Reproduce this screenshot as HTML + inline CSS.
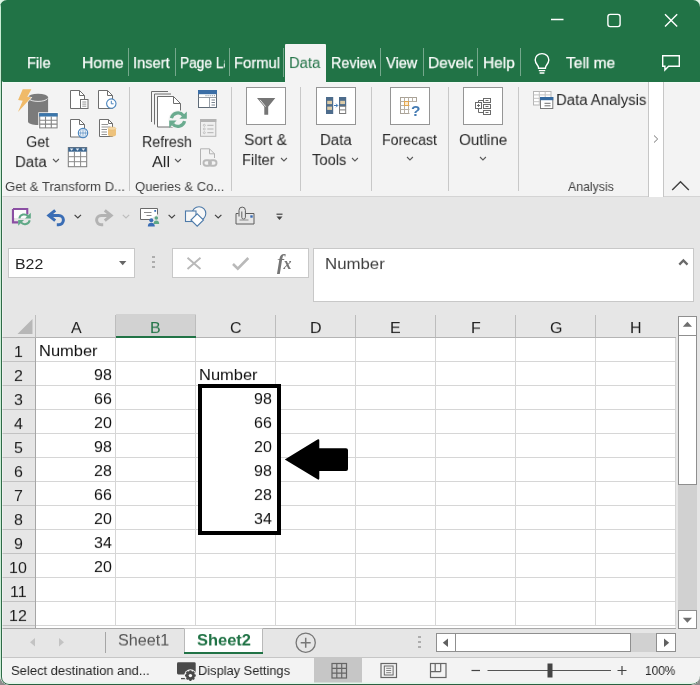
<!DOCTYPE html>
<html lang="en"><head><meta charset="utf-8"><title>Excel - Sheet2</title>
<style>
html,body{margin:0;padding:0;background:#dcf5e4}
body{width:700px;height:685px;overflow:hidden;position:relative;font-family:"Liberation Sans",sans-serif}
#win{position:absolute;left:0;top:0;width:700px;height:685px;overflow:hidden;border-radius:7px 7px 9px 9px;background:#e6e6e6}
.a{position:absolute;display:block}
.t{position:absolute;white-space:nowrap;line-height:1;will-change:transform}
.clip{position:absolute;overflow:hidden}
svg{overflow:visible}
</style></head><body>

<div class="a" style="left:0px;top:675px;width:10px;height:10px;background:#8c8c8c;"></div>
<div class="a" style="left:690px;top:675px;width:10px;height:10px;background:#8c8c8c;"></div>
<div id="win">
<div class="a" style="left:0px;top:0px;width:700px;height:82px;background:#217346;"></div>
<svg class="a" style="left:550px;top:11.6px" width="130" height="18" viewBox="0 0 130 18"><path d="M1 7.5H13.5" stroke="#fff" stroke-width="1.4" fill="none"/><rect x="57.9" y="2.4" width="12.2" height="12.2" rx="2.3" stroke="#fff" stroke-width="1.4" fill="none"/><path d="M115 2.3L127.2 14.5M127.2 2.3L115 14.5" stroke="#fff" stroke-width="1.4" fill="none"/></svg>
<div class="a" style="left:285px;top:44px;width:41px;height:39px;background:#f3f3f3;border-radius:1px 1px 0 0"></div>
<div class="a" style="left:128px;top:48px;width:1px;height:28px;background:rgba(255,255,255,0.38);"></div>
<div class="a" style="left:175px;top:48px;width:1px;height:28px;background:rgba(255,255,255,0.38);"></div>
<div class="a" style="left:229px;top:48px;width:1px;height:28px;background:rgba(255,255,255,0.38);"></div>
<div class="a" style="left:380px;top:48px;width:1px;height:28px;background:rgba(255,255,255,0.38);"></div>
<div class="a" style="left:423px;top:48px;width:1px;height:28px;background:rgba(255,255,255,0.38);"></div>
<div class="a" style="left:477px;top:48px;width:1px;height:28px;background:rgba(255,255,255,0.38);"></div>
<div class="a" style="left:520px;top:48px;width:1px;height:28px;background:rgba(255,255,255,0.38);"></div>
<div class="a" style="left:283px;top:48px;width:1px;height:29px;background:rgba(255,255,255,0.38);"></div>
<div class="t" style="left:26.83px;top:56.30px;font-size:16px;color:#fff;transform:scale(0.9133,0.93);transform-origin:0 0;-webkit-text-stroke:0.250px #fff;">File</div>
<div class="t" style="left:81.65px;top:56.30px;font-size:16px;color:#fff;transform:scale(0.9769,0.93);transform-origin:0 0;-webkit-text-stroke:0.250px #fff;">Home</div>
<div class="t" style="left:133.08px;top:56.30px;font-size:16px;color:#fff;transform:scale(0.9174,0.93);transform-origin:0 0;-webkit-text-stroke:0.250px #fff;">Insert</div>
<div class="clip" style="left:179.9px;top:48px;width:45.400000000000006px;height:30px">
<div class="t" style="left:-0.10px;top:8.30px;font-size:16px;color:#fff;-webkit-text-stroke:0.250px #fff;transform:scale(0.8558,0.93);transform-origin:0 0">Page Layout</div></div>
<div class="clip" style="left:233.9px;top:48px;width:45.70000000000002px;height:30px">
<div class="t" style="left:-0.18px;top:8.30px;font-size:16px;color:#fff;-webkit-text-stroke:0.250px #fff;transform:scale(0.9254,0.93);transform-origin:0 0">Formulas</div></div>
<div class="t" style="left:289.22px;top:56.30px;font-size:16px;color:#217346;transform:scale(0.9236,0.93);transform-origin:0 0;">Data</div>
<div class="clip" style="left:331px;top:48px;width:45.30000000000001px;height:30px">
<div class="t" style="left:-0.15px;top:8.30px;font-size:16px;color:#fff;-webkit-text-stroke:0.250px #fff;transform:scale(0.8984,0.93);transform-origin:0 0">Review</div></div>
<div class="t" style="left:386.33px;top:56.30px;font-size:16px;color:#fff;transform:scale(0.9091,0.93);transform-origin:0 0;-webkit-text-stroke:0.250px #fff;">View</div>
<div class="clip" style="left:428.2px;top:48px;width:45.0px;height:30px">
<div class="t" style="left:-0.24px;top:8.30px;font-size:16px;color:#fff;-webkit-text-stroke:0.250px #fff;transform:scale(0.9657,0.93);transform-origin:0 0">Developer</div></div>
<div class="t" style="left:482.66px;top:56.30px;font-size:16px;color:#fff;transform:scale(0.9658,0.93);transform-origin:0 0;-webkit-text-stroke:0.250px #fff;">Help</div>
<div class="t" style="left:566.39px;top:56.30px;font-size:16px;color:#fff;transform:scale(0.9698,0.93);transform-origin:0 0;-webkit-text-stroke:0.250px #fff;">Tell me</div>
<svg class="a" style="left:533px;top:52px" width="18" height="23" viewBox="0 0 18 23"><path d="M9 1.6C4.9 1.6 2.2 4.6 2.2 8.1c0 2.3 1.2 3.8 2.3 5.2 0.7 0.9 1.1 1.7 1.1 2.9h6.8c0-1.2 0.4-2 1.1-2.9 1.1-1.4 2.3-2.9 2.3-5.2C15.8 4.6 13.100 1.6 9 1.6Z" fill="none" stroke="#fff" stroke-width="1.4"/><path d="M5.8 18.6h6.4M6.6 21h4.8" stroke="#fff" stroke-width="1.3" fill="none"/></svg>
<svg class="a" style="left:661px;top:54px" width="20" height="18" viewBox="0 0 20 18"><path d="M1.7 1.7H18.3V12.300H7.6L3.9 16V12.300H1.700Z" fill="none" stroke="#fff" stroke-width="1.4" stroke-linejoin="miter"/></svg>
<div class="a" style="left:0px;top:82px;width:700px;height:114px;background:#f3f3f3;"></div>
<div class="a" style="left:0px;top:82px;width:285px;height:1px;background:#f1fbf5;"></div>
<div class="a" style="left:326px;top:82px;width:374px;height:1px;background:#f1fbf5;"></div>
<div class="a" style="left:0px;top:196px;width:700px;height:1px;background:#d4d4d4;"></div>
<div class="a" style="left:129px;top:87px;width:1px;height:104px;background:#c8c8c8;"></div>
<div class="a" style="left:231px;top:87px;width:1px;height:104px;background:#c8c8c8;"></div>
<div class="a" style="left:300px;top:87px;width:1px;height:104px;background:#c8c8c8;"></div>
<div class="a" style="left:371px;top:87px;width:1px;height:104px;background:#c8c8c8;"></div>
<div class="a" style="left:448px;top:87px;width:1px;height:104px;background:#c8c8c8;"></div>
<div class="a" style="left:518px;top:87px;width:1px;height:104px;background:#c8c8c8;"></div>
<div class="a" style="left:648px;top:82px;width:16px;height:115px;background:#ffffff;border-left:1px solid #c6c6c6;border-right:1px solid #c6c6c6;box-sizing:border-box"></div>
<svg class="a" style="left:652px;top:134px" width="8" height="10" viewBox="0 0 8 10"><path d="M2 1.500L5.700 5L2 8.500" fill="none" stroke="#777" stroke-width="1"/></svg>
<svg class="a" style="left:671px;top:180px" width="19" height="11" viewBox="0 0 19 11"><path d="M1.200 10L9.500 1.800L17.800 10" fill="none" stroke="#444" stroke-width="1.5"/></svg>
<div class="t" style="left:25.68px;top:135.20px;font-size:16px;color:#262626;transform:scale(0.9003,0.93);transform-origin:0 0;">Get</div>
<div class="t" style="left:15.00px;top:154.70px;font-size:16px;color:#262626;transform:scale(0.9360,0.93);transform-origin:0 0;">Data</div>
<svg class="a" style="left:52.05px;top:157.8px" width="7.9" height="5" viewBox="0 0 7.9 5"><path d="M1 1L3.95 4.00L6.90 1" fill="none" stroke="#5a5a5a" stroke-width="1.1"/></svg>
<div class="t" style="left:141.86px;top:135.20px;font-size:16px;color:#262626;transform:scale(0.8867,0.93);transform-origin:0 0;">Refresh</div>
<div class="t" style="left:151.80px;top:154.70px;font-size:16px;color:#262626;transform:scale(1.0167,0.93);transform-origin:0 0;">All</div>
<svg class="a" style="left:173.95px;top:157.8px" width="7.9" height="5" viewBox="0 0 7.9 5"><path d="M1 1L3.95 4.00L6.90 1" fill="none" stroke="#5a5a5a" stroke-width="1.1"/></svg>
<div class="t" style="left:244.21px;top:133.40px;font-size:16px;color:#262626;transform:scale(0.9645,0.93);transform-origin:0 0;">Sort &amp;</div>
<div class="t" style="left:241.83px;top:153.40px;font-size:16px;color:#262626;transform:scale(0.9176,0.93);transform-origin:0 0;">Filter</div>
<svg class="a" style="left:280.35px;top:156.5px" width="7.9" height="5" viewBox="0 0 7.9 5"><path d="M1 1L3.95 4.00L6.90 1" fill="none" stroke="#5a5a5a" stroke-width="1.1"/></svg>
<div class="t" style="left:319.60px;top:133.40px;font-size:16px;color:#262626;transform:scale(0.9360,0.93);transform-origin:0 0;">Data</div>
<div class="t" style="left:311.81px;top:153.40px;font-size:16px;color:#262626;transform:scale(0.9211,0.93);transform-origin:0 0;">Tools</div>
<svg class="a" style="left:351.05px;top:156.5px" width="7.9" height="5" viewBox="0 0 7.9 5"><path d="M1 1L3.95 4.00L6.90 1" fill="none" stroke="#5a5a5a" stroke-width="1.1"/></svg>
<div class="t" style="left:381.87px;top:133.40px;font-size:16px;color:#262626;transform:scale(0.8832,0.93);transform-origin:0 0;">Forecast</div>
<svg class="a" style="left:406.05px;top:156.1px" width="7.9" height="5" viewBox="0 0 7.9 5"><path d="M1 1L3.95 4.00L6.90 1" fill="none" stroke="#5a5a5a" stroke-width="1.1"/></svg>
<div class="t" style="left:459.22px;top:133.40px;font-size:16px;color:#262626;transform:scale(0.9512,0.93);transform-origin:0 0;">Outline</div>
<svg class="a" style="left:479.05px;top:156.1px" width="7.9" height="5" viewBox="0 0 7.9 5"><path d="M1 1L3.95 4.00L6.90 1" fill="none" stroke="#5a5a5a" stroke-width="1.1"/></svg>
<div class="t" style="left:556.21px;top:93.10px;font-size:16px;color:#262626;transform:scale(0.9315,0.93);transform-origin:0 0;">Data Analysis</div>
<div class="t" style="left:5.35px;top:179.66px;font-size:13.4px;color:#444444;transform:scale(0.9774,1.0);transform-origin:0 0;">Get &amp; Transform D...</div>
<div class="t" style="left:135.01px;top:179.66px;font-size:13.4px;color:#444444;transform:scale(0.9757,1.0);transform-origin:0 0;">Queries &amp; Co...</div>
<div class="t" style="left:568.40px;top:179.66px;font-size:13.4px;color:#444444;transform:scale(0.9182,1.0);transform-origin:0 0;">Analysis</div>
<div class="a" style="left:246px;top:87px;width:40px;height:38px;background:#fff;border:1px solid #959595;box-sizing:border-box"></div>
<div class="a" style="left:316px;top:87px;width:40px;height:38px;background:#fff;border:1px solid #959595;box-sizing:border-box"></div>
<div class="a" style="left:390px;top:87px;width:40px;height:38px;background:#fff;border:1px solid #959595;box-sizing:border-box"></div>
<div class="a" style="left:463px;top:87px;width:40px;height:38px;background:#fff;border:1px solid #959595;box-sizing:border-box"></div>
<svg class="a" style="left:0;top:0" width="700" height="685" viewBox="0 0 700 685"><path d="M26.900 97.300V121.600C26.900 124 31.900 126 38.050 126S49.200 124 49.200 121.600V97.300C49.200 94.500 44.200 92.700 38.050 92.700S26.900 94.500 26.900 97.300Z" fill="#f3f3f3"/>
<path d="M28 97.300V121.400C28 123.400 32.500 124.900 38.050 124.900S48.100 123.400 48.100 121.400V97.300Z" fill="#7b7b7b"/>
<ellipse cx="38.050" cy="97.300" rx="10.050" ry="3.600" fill="#7b7b7b"/>
<path d="M28.600 98.600C30 100.400 33.600 101.400 38.050 101.400S46.100 100.400 47.500 98.600" fill="none" stroke="#f3f3f3" stroke-width="0.900"/>
<path d="M22.700 89.300H31.400L27.300 96.800L31.200 97.600L18 112L22.700 100.800L18.100 99.900Z" fill="#f0ba68" stroke="#f3f3f3" stroke-width="1.200" paint-order="stroke"/>
<rect x="38.300" y="112.300" width="20.100" height="16.800" fill="#fff"/>
<rect x="39.700" y="113.700" width="17.400" height="14.200" fill="#fff" stroke="#858585" stroke-width="1.100"/>
<rect x="39.150" y="113.150" width="18.500" height="3.400" fill="#3b76ab"/>
<path d="M39.700 120.300H57.100M39.700 124.100H57.100M45.500 116.500V127.900M51.300 116.500V127.900" stroke="#858585" stroke-width="1.100" fill="none"/>
<path d="M70.5 90.5H79.5L84.5 95.5V108.5H70.5Z" fill="#fff" stroke="#6e6e6e" stroke-width="1"/>
<path d="M79.5 90.5V95.5H84.5" fill="none" stroke="#6e6e6e" stroke-width="1"/>
<rect x="80.500" y="99.500" width="7.500" height="9" fill="#fff" stroke="#6e6e6e" stroke-width="1"/>
<path d="M82.300 102H86.300M82.300 104.100H86.300M82.300 106.200H86.300" stroke="#7a7a7a" stroke-width="0.800"/>
<path d="M98.5 90.5H107.5L112.5 95.5V108.5H98.5Z" fill="#fff" stroke="#6e6e6e" stroke-width="1"/>
<path d="M107.5 90.5V95.5H112.5" fill="none" stroke="#6e6e6e" stroke-width="1"/>
<circle cx="111.300" cy="103.600" r="4.700" fill="#fff" stroke="#4a84bd" stroke-width="1.100"/>
<path d="M111.300 100.800V103.800H113.600" fill="none" stroke="#4a84bd" stroke-width="1"/>
<path d="M70.5 119.5H79.5L84.5 124.5V137.0H70.5Z" fill="#fff" stroke="#6e6e6e" stroke-width="1"/>
<path d="M79.5 119.5V124.5H84.5" fill="none" stroke="#6e6e6e" stroke-width="1"/>
<circle cx="83" cy="133" r="4.700" fill="#fff" stroke="#4a84bd" stroke-width="1.100"/>
<path d="M78.400 133H87.600M83 128.400V137.600" stroke="#4a84bd" stroke-width="0.700" fill="none"/>
<ellipse cx="83" cy="133" rx="2.400" ry="4.700" fill="none" stroke="#4a84bd" stroke-width="0.600"/>
<path d="M99.5 119.5H108.5L112.5 123.5V136.5H99.5Z" fill="#fff" stroke="#6e6e6e" stroke-width="1"/>
<path d="M108.5 119.5V123.5H112.5" fill="none" stroke="#6e6e6e" stroke-width="1"/>
<path d="M101.500 124.500H108M101.500 127H110.500M101.500 129.500H107M101.500 132H107M101.500 134.500H107" stroke="#7a7a7a" stroke-width="0.800"/>
<path d="M108 128.500V134.800C108 135.800 109.800 136.600 112 136.600S116 135.800 116 134.800V128.500Z" fill="#edc27c"/>
<ellipse cx="112" cy="128.500" rx="4" ry="1.500" fill="#f5d9a8" stroke="#e6b96f" stroke-width="0.500"/>
<rect x="68.300" y="147.500" width="18.400" height="19.200" fill="#fff" stroke="#7a7a7a" stroke-width="1"/>
<rect x="68.300" y="147.500" width="18.400" height="4.200" fill="#3c6791"/>
<path d="M69.800 148.600H73.400L71.600 150.800ZM75.700 148.600H79.300L77.500 150.800ZM81.600 148.600H85.200L83.400 150.800Z" fill="#e8eef5"/>
<path d="M68.300 156.700H86.700M68.300 161.700H86.700M74.400 151.700V166.700M80.600 151.700V166.700" stroke="#8a8a8a" stroke-width="1" fill="none"/>
<path d="M151.5 122V91.5H168" fill="none" stroke="#6e6e6e" stroke-width="1"/>
<path d="M154.5 124.5V94.0H171" fill="none" stroke="#6e6e6e" stroke-width="1"/>
<path d="M157.500 96.500H173.500L180.500 103.500V127H157.500Z" fill="#fff" stroke="#6e6e6e" stroke-width="1"/>
<path d="M173.500 96.500V103.500H180.500" fill="none" stroke="#6e6e6e" stroke-width="1"/>
<circle cx="178" cy="119.700" r="9.600" fill="#f3f3f3"/>
<path d="M171.400 118.200A6.800 6.800 0 0 1 183.300 115.500" fill="none" stroke="#6aab8f" stroke-width="3.200"/>
<path d="M186.800 111.400V118.800H179.400Z" fill="#6aab8f"/>
<path d="M184.600 121.200A6.800 6.800 0 0 1 172.700 123.900" fill="none" stroke="#6aab8f" stroke-width="3.200"/>
<path d="M169.200 128V120.600H176.600Z" fill="#6aab8f"/>
<rect x="198.500" y="90.500" width="18" height="17" fill="#fff" stroke="#5f6b78" stroke-width="1"/>
<rect x="198" y="90" width="19" height="4.200" fill="#3b6ea6"/>
<path d="M205.500 95.700H215.500" stroke="#6b7785" stroke-width="0.900" stroke-dasharray="1 1.100"/>
<path d="M198.500 97.500H216.500M209.500 97.500V107.500" stroke="#7d8791" stroke-width="0.800" fill="none"/>
<path d="M211.500 100H215M211.500 102.500H215M211.500 105H215" stroke="#6b7785" stroke-width="0.900" fill="none"/>
<rect x="200.500" y="119.500" width="15.300" height="16.800" fill="#efefef" stroke="#b3b3b3" stroke-width="1"/>
<rect x="200" y="119" width="16.300" height="3" fill="#b3b3b3"/>
<circle cx="204.300" cy="125.3" r="1" fill="none" stroke="#b3b3b3" stroke-width="0.700"/>
<path d="M207.300 125.3H213.500" stroke="#b3b3b3" stroke-width="1"/>
<circle cx="204.300" cy="129" r="1" fill="none" stroke="#b3b3b3" stroke-width="0.700"/>
<path d="M207.300 129H213.500" stroke="#b3b3b3" stroke-width="1"/>
<circle cx="204.300" cy="132.7" r="1" fill="none" stroke="#b3b3b3" stroke-width="0.700"/>
<path d="M207.300 132.7H213.500" stroke="#b3b3b3" stroke-width="1"/>
<path d="M200.500 165V148.800H209.500L214.500 153.800V158" fill="none" stroke="#b3b3b3" stroke-width="1"/>
<path d="M209.500 148.800V153.800H214.500" fill="none" stroke="#b3b3b3" stroke-width="1"/>
<rect x="203.500" y="160.300" width="7.500" height="5.400" rx="2.700" fill="none" stroke="#b9b9b9" stroke-width="1.900"/>
<rect x="209" y="160.300" width="7.500" height="5.400" rx="2.700" fill="none" stroke="#b9b9b9" stroke-width="1.900"/>
<path d="M257 98H275.300L268.200 106.800V114.800H264.300V106.800Z" fill="#757575"/>
<path d="M260 99.800L265.600 106.600" stroke="#e4e4e4" stroke-width="1" fill="none"/>
<rect x="326" y="97" width="7.200" height="17" fill="#4d6c8c"/>
<rect x="327.200" y="100.800" width="4.800" height="3.300" fill="#dccaa6"/><rect x="327.200" y="106.600" width="4.800" height="3.300" fill="#dccaa6"/>
<rect x="339" y="97" width="7.200" height="9.300" fill="#4d6c8c"/>
<rect x="340.200" y="100.800" width="4.800" height="3.300" fill="#dccaa6"/>
<rect x="339.500" y="106.300" width="6.200" height="7.200" fill="#fff" stroke="#7b7b7b" stroke-width="1"/>
<path d="M339.500 109.900H345.700" stroke="#7b7b7b" stroke-width="1"/>
<path d="M334 105.500H337.600M336 103.700L337.800 105.500L336 107.300" stroke="#3f78b3" stroke-width="1" fill="none"/>
<rect x="400.500" y="97.500" width="16" height="16" fill="#fff" stroke="#a9a297" stroke-width="1"/>
<rect x="404.500" y="101.500" width="4" height="4" fill="#fbe9cd"/>
<path d="M404.500 97.500V113.500M408.500 97.500V113.500M412.500 97.500V113.500M400.500 101.500H416.500M400.500 105.500H416.500M400.500 109.500H416.500" stroke="#b9b1a5" stroke-width="1" fill="none"/>
<rect x="404.500" y="101.500" width="4" height="4" fill="none" stroke="#e3a64e" stroke-width="1"/>
<rect x="409.500" y="102" width="12" height="15" fill="#fff"/>
<text x="411" y="115.800" font-family="Liberation Sans, sans-serif" font-weight="700" font-size="15.500" fill="#447bb3">?</text>
<path d="M483.500 100.500H478.500V102.500M478.500 108.500V112.500H483.500" fill="none" stroke="#6a6a6a" stroke-width="1"/>
<rect x="475.500" y="102.500" width="6" height="6" fill="#fff" stroke="#6a6a6a" stroke-width="1"/>
<path d="M477 105.500H480M478.500 104V107" stroke="#6a6a6a" stroke-width="1"/>
<rect x="483.500" y="98.5" width="7" height="4" fill="#fff" stroke="#6a6a6a" stroke-width="1"/>
<path d="M485.500 100.5H488.500" stroke="#6a6a6a" stroke-width="1"/>
<rect x="483.500" y="104.5" width="7" height="4" fill="#fff" stroke="#6a6a6a" stroke-width="1"/>
<path d="M485.500 106.5H488.500" stroke="#6a6a6a" stroke-width="1"/>
<rect x="483.500" y="110.5" width="7" height="4" fill="#fff" stroke="#6a6a6a" stroke-width="1"/>
<path d="M485.500 112.5H488.500" stroke="#6a6a6a" stroke-width="1"/>
<rect x="533.500" y="91.500" width="17.500" height="13.500" fill="#fff" stroke="#b5b5b5" stroke-width="1"/>
<path d="M533.500 94.900H551M533.500 98.300H551M533.500 101.700H551M539.300 91.500V105M545.200 91.500V105" stroke="#c3c3c3" stroke-width="1" fill="none"/>
<rect x="540.500" y="97.500" width="12.300" height="11" fill="#fff" stroke="#7a7a7a" stroke-width="1"/>
<rect x="540" y="97" width="13.300" height="3.200" fill="#356aa0"/>
<path d="M544.500 103.300H550.500M544.500 105.800H550.500" stroke="#6f6f6f" stroke-width="1"/></svg>
<svg class="a" style="left:0;top:0" width="700" height="685" viewBox="0 0 700 685"><path d="M13 209H27.200V214.500M18.500 222.300H13V209" fill="none" stroke="#8b4fa3" stroke-width="2.200"/>
<rect x="14" y="210" width="12.200" height="8" fill="#fff" opacity="0.85"/>
<path d="M19.300 218.400A5 5 0 0 1 28 216.200" fill="none" stroke="#5fa886" stroke-width="2"/>
<path d="M30.800 212.800V218.600H25Z" fill="#5fa886"/>
<path d="M29.700 220.200A5 5 0 0 1 21 222.400" fill="none" stroke="#5fa886" stroke-width="2"/>
<path d="M18.200 225.800V220H24Z" fill="#5fa886"/>
<path d="M50.500 215.500H58.800A4.600 4.600 0 0 1 58.800 224.700H56.800" fill="none" stroke="#3a6db5" stroke-width="3"/>
<path d="M55.200 210.300L48.800 215.500L55.200 220.700" fill="none" stroke="#3a6db5" stroke-width="3" stroke-linejoin="miter"/>
<path d="M109.500 215.500H101.200A4.600 4.600 0 0 0 101.200 224.700H103.200" fill="none" stroke="#b3b3b3" stroke-width="3"/>
<path d="M104.800 210.300L111.200 215.500L104.800 220.700" fill="none" stroke="#b3b3b3" stroke-width="3" stroke-linejoin="miter"/>
<path d="M74.6 214.8L77.8 218.0L81.0 214.8" fill="none" stroke="#444" stroke-width="1.2"/>
<path d="M122.8 214.8L126 218.0L129.2 214.8" fill="none" stroke="#bdbdbd" stroke-width="1.2"/>
<path d="M168.60000000000002 214.8L171.8 218.0L175.0 214.8" fill="none" stroke="#444" stroke-width="1.2"/>
<path d="M215.0 214.8L218.2 218.0L221.39999999999998 214.8" fill="none" stroke="#444" stroke-width="1.2"/>
<path d="M150 219.500H140.500V208.500H157.500V214.500" fill="#fff" stroke="#6a6a6a" stroke-width="1"/>
<path d="M144 212.500H151.500M146.500 215.500H151.500" stroke="#8a8a8a" stroke-width="1"/>
<rect x="154.300" y="210" width="1.800" height="1.800" fill="#3a6db5"/>
<circle cx="151.300" cy="220.200" r="2" fill="#3a6db5"/><path d="M147.800 226.500C147.800 223.700 149.300 222.800 151.300 222.800S154.800 223.700 154.800 226.500Z" fill="#3a6db5"/>
<circle cx="156.300" cy="218" r="1.800" fill="#5fa886"/><path d="M153.600 224C153.600 221.500 154.600 220.400 156.300 220.400S159.200 221.500 159.200 224Z" fill="#5fa886"/>
<circle cx="199" cy="213.500" r="6.800" fill="#f7f7f7" stroke="#4d7aa9" stroke-width="1.100"/>
<rect x="185.500" y="211" width="10.500" height="10.500" fill="#f7f7f7" stroke="#4d7aa9" stroke-width="1.100"/>
<path d="M197.200 213.800L203.500 220L197.200 226.200L190.900 220Z" fill="#fff" stroke="#4d7aa9" stroke-width="1.100"/>
<path d="M238.500 213.500H236V224H254V213.500H246" fill="none" stroke="#5c5c5c" stroke-width="1"/>
<rect x="250.300" y="215.300" width="2.400" height="2.400" fill="#3a6db5"/>
<path d="M239 216.500V210.300A3.200 3.200 0 0 1 245.400 210.300V217.300A1.800 1.800 0 0 1 241.800 217.300V211.500" fill="none" stroke="#5c5c5c" stroke-width="1"/>
<path d="M239.500 220H248.500" stroke="#8a8a8a" stroke-width="1"/>
<path d="M276.500 214.200H282.500" stroke="#444" stroke-width="1.200"/><path d="M276.500 216.600H282.500L279.500 220Z" fill="#444"/></svg>
<div class="a" style="left:8px;top:248px;width:127px;height:30px;background:#fff;border:1px solid #c8c8c8;box-sizing:border-box"></div>
<div class="t" style="left:15.13px;top:255.90px;font-size:15px;color:#262626;transform:scale(1.0586,1.0);transform-origin:0 0;">B22</div>
<svg class="a" style="left:119px;top:261px" width="8" height="5" viewBox="0 0 8 5"><path d="M0 0H7.400L3.700 4.200Z" fill="#666"/></svg>
<div class="a" style="left:152.3px;top:256px;width:2.4px;height:2.4px;background:#adadad;"></div>
<div class="a" style="left:152.3px;top:261px;width:2.4px;height:2.4px;background:#adadad;"></div>
<div class="a" style="left:152.3px;top:266px;width:2.4px;height:2.4px;background:#adadad;"></div>
<div class="a" style="left:172px;top:248px;width:137px;height:30px;background:#fff;border:1px solid #c8c8c8;box-sizing:border-box"></div>
<svg class="a" style="left:186px;top:256px" width="16" height="14" viewBox="0 0 16 14"><path d="M1.500 1.800L14.500 13M14.500 1.800L1.500 13" stroke="#b9b9b9" stroke-width="1.900" fill="none"/></svg>
<svg class="a" style="left:231px;top:256px" width="19" height="15" viewBox="0 0 19 15"><path d="M2 8L6.800 12.600L17.300 2" stroke="#b9b9b9" stroke-width="2.600" fill="none"/></svg>
<div class="t" style="left:276.800px;top:251.500px;font-size:21px;color:#757575;font-family:'Liberation Serif',serif;font-style:italic;font-weight:700;letter-spacing:-0.5px">f<span style="font-size:16px">x</span></div>
<div class="a" style="left:313px;top:248px;width:381px;height:54px;background:#fff;border:1px solid #c8c8c8;box-sizing:border-box"></div>
<div class="t" style="left:325.45px;top:256.90px;font-size:16px;color:#404040;transform:scale(1.0513,0.93);transform-origin:0 0;">Number</div>
<svg class="a" style="left:677px;top:258px" width="13" height="8" viewBox="0 0 13 8"><path d="M2.300 6.600L6.400 2.500L10.500 6.600" fill="none" stroke="#6a6a6a" stroke-width="2.300"/></svg>
<div class="a" style="left:2px;top:338px;width:673px;height:290px;background:#fff;"></div>
<div class="a" style="left:2px;top:628px;width:674px;height:1px;background:#a9a9a9;"></div>
<div class="a" style="left:116px;top:314px;width:80px;height:24px;background:#d2d2d2;"></div>
<div class="a" style="left:116px;top:336px;width:80px;height:2px;background:#217346;"></div>
<div class="t" style="left:70.68px;top:320.60px;font-size:16px;color:#1c1c1c;transform:scale(1,0.93);transform-origin:0 0;">A</div>
<div class="t" style="left:150.44px;top:320.60px;font-size:16px;color:#217346;transform:scale(1,0.93);transform-origin:0 0;">B</div>
<div class="t" style="left:230.12px;top:320.60px;font-size:16px;color:#1c1c1c;transform:scale(1,0.93);transform-origin:0 0;">C</div>
<div class="t" style="left:309.96px;top:320.60px;font-size:16px;color:#1c1c1c;transform:scale(1,0.93);transform-origin:0 0;">D</div>
<div class="t" style="left:390.36px;top:320.60px;font-size:16px;color:#1c1c1c;transform:scale(1,0.93);transform-origin:0 0;">E</div>
<div class="t" style="left:470.80px;top:320.60px;font-size:16px;color:#1c1c1c;transform:scale(1,0.93);transform-origin:0 0;">F</div>
<div class="t" style="left:549.96px;top:320.60px;font-size:16px;color:#1c1c1c;transform:scale(1,0.93);transform-origin:0 0;">G</div>
<div class="t" style="left:630.24px;top:320.60px;font-size:16px;color:#1c1c1c;transform:scale(1,0.93);transform-origin:0 0;">H</div>
<div class="a" style="left:35px;top:315px;width:1px;height:22px;background:#bdbdbd;"></div>
<div class="a" style="left:115px;top:315px;width:1px;height:22px;background:#bdbdbd;"></div>
<div class="a" style="left:195px;top:315px;width:1px;height:22px;background:#bdbdbd;"></div>
<div class="a" style="left:275px;top:315px;width:1px;height:22px;background:#bdbdbd;"></div>
<div class="a" style="left:355px;top:315px;width:1px;height:22px;background:#bdbdbd;"></div>
<div class="a" style="left:435px;top:315px;width:1px;height:22px;background:#bdbdbd;"></div>
<div class="a" style="left:515px;top:315px;width:1px;height:22px;background:#bdbdbd;"></div>
<div class="a" style="left:595px;top:315px;width:1px;height:22px;background:#bdbdbd;"></div>
<div class="a" style="left:2px;top:337px;width:674px;height:1px;background:#b4b4b4;"></div>
<div class="a" style="left:116px;top:336px;width:80px;height:2px;background:#217346;"></div>
<svg class="a" style="left:16px;top:318px" width="18" height="17" viewBox="0 0 18 17"><path d="M16.500 1V16H1.500Z" fill="#b7b7b7"/></svg>
<div class="a" style="left:2px;top:338px;width:33px;height:290px;background:#e6e6e6;"></div>
<div class="a" style="left:35px;top:338px;width:1px;height:290px;background:#a6a6a6;"></div>
<div class="t" style="left:13.82px;top:344.60px;font-size:16px;color:#1c1c1c;transform:scale(1,0.93);transform-origin:0 0;">1</div>
<div class="a" style="left:2px;top:361px;width:33px;height:1px;background:#c2c2c2;"></div>
<div class="t" style="left:14.06px;top:368.60px;font-size:16px;color:#1c1c1c;transform:scale(1,0.93);transform-origin:0 0;">2</div>
<div class="a" style="left:2px;top:385px;width:33px;height:1px;background:#c2c2c2;"></div>
<div class="t" style="left:14.06px;top:392.60px;font-size:16px;color:#1c1c1c;transform:scale(1,0.93);transform-origin:0 0;">3</div>
<div class="a" style="left:2px;top:409px;width:33px;height:1px;background:#c2c2c2;"></div>
<div class="t" style="left:14.14px;top:416.60px;font-size:16px;color:#1c1c1c;transform:scale(1,0.93);transform-origin:0 0;">4</div>
<div class="a" style="left:2px;top:433px;width:33px;height:1px;background:#c2c2c2;"></div>
<div class="t" style="left:14.06px;top:440.60px;font-size:16px;color:#1c1c1c;transform:scale(1,0.93);transform-origin:0 0;">5</div>
<div class="a" style="left:2px;top:457px;width:33px;height:1px;background:#c2c2c2;"></div>
<div class="t" style="left:13.98px;top:464.60px;font-size:16px;color:#1c1c1c;transform:scale(1,0.93);transform-origin:0 0;">6</div>
<div class="a" style="left:2px;top:481px;width:33px;height:1px;background:#c2c2c2;"></div>
<div class="t" style="left:14.06px;top:488.60px;font-size:16px;color:#1c1c1c;transform:scale(1,0.93);transform-origin:0 0;">7</div>
<div class="a" style="left:2px;top:505px;width:33px;height:1px;background:#c2c2c2;"></div>
<div class="t" style="left:14.02px;top:512.60px;font-size:16px;color:#1c1c1c;transform:scale(1,0.93);transform-origin:0 0;">8</div>
<div class="a" style="left:2px;top:529px;width:33px;height:1px;background:#c2c2c2;"></div>
<div class="t" style="left:14.06px;top:536.60px;font-size:16px;color:#1c1c1c;transform:scale(1,0.93);transform-origin:0 0;">9</div>
<div class="a" style="left:2px;top:553px;width:33px;height:1px;background:#c2c2c2;"></div>
<div class="t" style="left:9.30px;top:560.60px;font-size:16px;color:#1c1c1c;transform:scale(1,0.93);transform-origin:0 0;">10</div>
<div class="a" style="left:2px;top:577px;width:33px;height:1px;background:#c2c2c2;"></div>
<div class="t" style="left:9.98px;top:584.60px;font-size:16px;color:#1c1c1c;transform:scale(1,0.93);transform-origin:0 0;">11</div>
<div class="a" style="left:2px;top:601px;width:33px;height:1px;background:#c2c2c2;"></div>
<div class="t" style="left:9.42px;top:608.60px;font-size:16px;color:#1c1c1c;transform:scale(1,0.93);transform-origin:0 0;">12</div>
<div class="a" style="left:2px;top:625px;width:33px;height:1px;background:#c2c2c2;"></div>
<div class="a" style="left:115px;top:338px;width:1px;height:288px;background:#d6d6d6;"></div>
<div class="a" style="left:195px;top:338px;width:1px;height:288px;background:#d6d6d6;"></div>
<div class="a" style="left:275px;top:338px;width:1px;height:288px;background:#d6d6d6;"></div>
<div class="a" style="left:355px;top:338px;width:1px;height:288px;background:#d6d6d6;"></div>
<div class="a" style="left:435px;top:338px;width:1px;height:288px;background:#d6d6d6;"></div>
<div class="a" style="left:515px;top:338px;width:1px;height:288px;background:#d6d6d6;"></div>
<div class="a" style="left:595px;top:338px;width:1px;height:288px;background:#d6d6d6;"></div>
<div class="a" style="left:675px;top:338px;width:1px;height:288px;background:#d6d6d6;"></div>
<div class="a" style="left:36px;top:361px;width:640px;height:1px;background:#d6d6d6;"></div>
<div class="a" style="left:36px;top:385px;width:640px;height:1px;background:#d6d6d6;"></div>
<div class="a" style="left:36px;top:409px;width:640px;height:1px;background:#d6d6d6;"></div>
<div class="a" style="left:36px;top:433px;width:640px;height:1px;background:#d6d6d6;"></div>
<div class="a" style="left:36px;top:457px;width:640px;height:1px;background:#d6d6d6;"></div>
<div class="a" style="left:36px;top:481px;width:640px;height:1px;background:#d6d6d6;"></div>
<div class="a" style="left:36px;top:505px;width:640px;height:1px;background:#d6d6d6;"></div>
<div class="a" style="left:36px;top:529px;width:640px;height:1px;background:#d6d6d6;"></div>
<div class="a" style="left:36px;top:553px;width:640px;height:1px;background:#d6d6d6;"></div>
<div class="a" style="left:36px;top:577px;width:640px;height:1px;background:#d6d6d6;"></div>
<div class="a" style="left:36px;top:601px;width:640px;height:1px;background:#d6d6d6;"></div>
<div class="a" style="left:36px;top:625px;width:640px;height:1px;background:#d6d6d6;"></div>
<div class="t" style="left:39.08px;top:344.00px;font-size:16px;color:#111;transform:scale(1.0296,0.93);transform-origin:0 0;">Number</div>
<div class="t" style="left:94.48px;top:368.00px;font-size:16px;color:#111;letter-spacing:0.100px;transform:scale(1,0.93);transform-origin:0 0;">98</div>
<div class="t" style="left:94.48px;top:392.00px;font-size:16px;color:#111;letter-spacing:0.100px;transform:scale(1,0.93);transform-origin:0 0;">66</div>
<div class="t" style="left:94.40px;top:416.00px;font-size:16px;color:#111;letter-spacing:0.100px;transform:scale(1,0.93);transform-origin:0 0;">20</div>
<div class="t" style="left:94.48px;top:440.00px;font-size:16px;color:#111;letter-spacing:0.100px;transform:scale(1,0.93);transform-origin:0 0;">98</div>
<div class="t" style="left:94.48px;top:464.00px;font-size:16px;color:#111;letter-spacing:0.100px;transform:scale(1,0.93);transform-origin:0 0;">28</div>
<div class="t" style="left:94.48px;top:488.00px;font-size:16px;color:#111;letter-spacing:0.100px;transform:scale(1,0.93);transform-origin:0 0;">66</div>
<div class="t" style="left:94.40px;top:512.00px;font-size:16px;color:#111;letter-spacing:0.100px;transform:scale(1,0.93);transform-origin:0 0;">20</div>
<div class="t" style="left:94.32px;top:536.00px;font-size:16px;color:#111;letter-spacing:0.100px;transform:scale(1,0.93);transform-origin:0 0;">34</div>
<div class="t" style="left:94.40px;top:560.00px;font-size:16px;color:#111;letter-spacing:0.100px;transform:scale(1,0.93);transform-origin:0 0;">20</div>
<div class="t" style="left:199.08px;top:368.00px;font-size:16px;color:#111;transform:scale(1.0296,0.93);transform-origin:0 0;">Number</div>
<div class="a" style="left:198px;top:384px;width:83px;height:151px;background:#fff;border:4.5px solid #000;box-sizing:border-box"></div>
<div class="t" style="left:254.48px;top:392.00px;font-size:16px;color:#111;letter-spacing:0.100px;transform:scale(1,0.93);transform-origin:0 0;">98</div>
<div class="t" style="left:254.48px;top:416.00px;font-size:16px;color:#111;letter-spacing:0.100px;transform:scale(1,0.93);transform-origin:0 0;">66</div>
<div class="t" style="left:254.40px;top:440.00px;font-size:16px;color:#111;letter-spacing:0.100px;transform:scale(1,0.93);transform-origin:0 0;">20</div>
<div class="t" style="left:254.48px;top:464.00px;font-size:16px;color:#111;letter-spacing:0.100px;transform:scale(1,0.93);transform-origin:0 0;">98</div>
<div class="t" style="left:254.48px;top:488.00px;font-size:16px;color:#111;letter-spacing:0.100px;transform:scale(1,0.93);transform-origin:0 0;">28</div>
<div class="t" style="left:254.32px;top:512.00px;font-size:16px;color:#111;letter-spacing:0.100px;transform:scale(1,0.93);transform-origin:0 0;">34</div>
<svg class="a" style="left:283px;top:436px" width="68" height="48" viewBox="0 0 68 48"><path d="M1.800 23.400L34.500 3.600Q36.300 2.600 36.300 4.600V12.300H63Q65 12.300 65 14.300V33Q65 35 63 35H36.300V42.300Q36.300 44.300 34.500 43.300Z" fill="#000"/></svg>
<div class="a" style="left:678px;top:316px;width:19px;height:313px;background:#d1d1d1;"></div>
<div class="a" style="left:678px;top:316px;width:19px;height:20px;background:#fff;border:1px solid #8f8f8f;box-sizing:border-box"></div>
<svg class="a" style="left:682px;top:321px" width="11" height="7" viewBox="0 0 11 7"><path d="M0.800 5.800H10L5.400 0.800Z" fill="#6e6e6e"/></svg>
<div class="a" style="left:678px;top:335px;width:19px;height:150px;background:#fff;border:1px solid #8f8f8f;box-sizing:border-box"></div>
<div class="a" style="left:678px;top:610px;width:19px;height:19px;background:#fff;border:1px solid #8f8f8f;box-sizing:border-box"></div>
<svg class="a" style="left:682px;top:617px" width="11" height="7" viewBox="0 0 11 7"><path d="M0.800 0.800H10L5.400 5.800Z" fill="#6e6e6e"/></svg>
<svg class="a" style="left:29px;top:637px" width="8" height="11" viewBox="0 0 8 11"><path d="M6 1V9.400L1 5.200Z" fill="#c3c3c3"/></svg>
<svg class="a" style="left:58px;top:637px" width="8" height="11" viewBox="0 0 8 11"><path d="M1 1V9.400L6 5.200Z" fill="#c3c3c3"/></svg>
<div class="a" style="left:105px;top:632px;width:1px;height:21px;background:#a6a6a6;"></div>
<div class="t" style="left:118.27px;top:633.10px;font-size:16px;color:#555;transform:scale(1.0106,0.96);transform-origin:0 0;">Sheet1</div>
<div class="a" style="left:184px;top:628px;width:79px;height:26px;background:#fff;border-left:1px solid #b9b9b9;border-right:1px solid #b9b9b9;border-top:1px solid #cfcfcf;box-sizing:border-box"></div>
<div class="a" style="left:184px;top:652px;width:79px;height:2px;background:#217346;"></div>
<div class="t" style="left:196.91px;top:633.10px;font-size:16px;color:#217346;font-weight:700;transform:scale(1.0280,0.96);transform-origin:0 0;">Sheet2</div>
<svg class="a" style="left:295px;top:632px" width="22" height="22" viewBox="0 0 22 22"><circle cx="10.700" cy="10.700" r="9.600" fill="none" stroke="#777" stroke-width="1.300"/><path d="M5.700 10.700H15.700M10.700 5.700V15.700" stroke="#777" stroke-width="1.500"/></svg>
<div class="a" style="left:418.3px;top:636px;width:2.4px;height:2.4px;background:#adadad;"></div>
<div class="a" style="left:418.3px;top:641px;width:2.4px;height:2.4px;background:#adadad;"></div>
<div class="a" style="left:418.3px;top:646px;width:2.4px;height:2.4px;background:#adadad;"></div>
<div class="a" style="left:436px;top:633px;width:240px;height:19px;background:#d1d1d1;"></div>
<div class="a" style="left:436px;top:633px;width:20px;height:19px;background:#fff;border:1px solid #8f8f8f;box-sizing:border-box"></div>
<svg class="a" style="left:442px;top:638px" width="7" height="10" viewBox="0 0 7 10"><path d="M6 0.500V9L0.800 4.750Z" fill="#606060"/></svg>
<div class="a" style="left:455px;top:633px;width:176px;height:19px;background:#fff;border:1px solid #8f8f8f;box-sizing:border-box"></div>
<div class="a" style="left:656px;top:633px;width:20px;height:19px;background:#fff;border:1px solid #8f8f8f;box-sizing:border-box"></div>
<svg class="a" style="left:663px;top:638px" width="7" height="10" viewBox="0 0 7 10"><path d="M1 0.500V9L6.200 4.750Z" fill="#606060"/></svg>
<div class="a" style="left:0px;top:657px;width:700px;height:1px;background:#c6c6c6;"></div>
<div class="a" style="left:0px;top:658px;width:700px;height:27px;background:#f3f3f3;"></div>
<div class="t" style="left:10.72px;top:664.49px;font-size:13.6px;color:#262626;transform:scale(0.9555,1.0);transform-origin:0 0;">Select destination and...</div>
<div class="t" style="left:197.97px;top:664.49px;font-size:13.6px;color:#262626;transform:scale(0.9443,1.0);transform-origin:0 0;">Display Settings</div>
<div class="a" style="left:314px;top:658px;width:48px;height:27px;background:#c6c6c6;"></div>
<svg class="a" style="left:0;top:0" width="700" height="685" viewBox="0 0 700 685"><rect x="177" y="662.200" width="18.700" height="12.200" rx="1.300" fill="#4a4a4a"/>
<path d="M181 678.600H186" stroke="#4a4a4a" stroke-width="1.300"/>
<circle cx="190.400" cy="675.600" r="6.300" fill="#f3f3f3"/>
<circle cx="190.400" cy="675.600" r="3.300" fill="none" stroke="#4a4a4a" stroke-width="2.600"/>
<path d="M190.400 670.200V681M185 675.600H195.800M186.600 671.800L194.200 679.400M194.200 671.800L186.600 679.400" stroke="#4a4a4a" stroke-width="2"/>
<circle cx="190.400" cy="675.600" r="1.700" fill="#fafafa"/>
<rect x="332" y="663.500" width="14.500" height="14.500" fill="none" stroke="#666" stroke-width="1.200"/>
<path d="M336.800 663.500V678M341.700 663.500V678M332 668.300H346.500M332 673.200H346.500" stroke="#666" stroke-width="1.200"/>
<rect x="381" y="663.500" width="15.500" height="14" fill="none" stroke="#666" stroke-width="1.200"/>
<rect x="384.300" y="666" width="8.800" height="9" fill="none" stroke="#666" stroke-width="1"/>
<path d="M386.200 668.300H391.200M386.200 670.500H391.200M386.200 672.700H391.200" stroke="#666" stroke-width="0.800"/>
<rect x="430.500" y="663.500" width="15.500" height="14" fill="none" stroke="#666" stroke-width="1.200"/>
<path d="M435.200 663.500V671.700M440.700 663.500V671.700M430.500 671.700H440.700" fill="none" stroke="#666" stroke-width="1.200"/>
<path d="M471.500 670.500H480" stroke="#444" stroke-width="1.200"/>
<path d="M487.500 670.500H611" stroke="#555" stroke-width="1"/>
<rect x="547.500" y="663.500" width="5" height="14" fill="#444"/>
<path d="M617.500 670.500H626.500M622 666V675" stroke="#444" stroke-width="1.200"/></svg>
<div class="t" style="left:644.81px;top:664.26px;font-size:13.4px;color:#262626;transform:scale(0.8864,1.0);transform-origin:0 0;">100%</div>
<div class="a" style="left:2px;top:81px;width:1px;height:600px;background:rgba(255,255,255,0.45);"></div>
<div class="a" style="left:6px;top:682px;width:688px;height:1px;background:rgba(225,245,232,0.5);"></div>
<div class="a" style="left:5px;top:683px;width:690px;height:1px;background:#e3f6ea;"></div>
<div class="a" style="left:0;top:5px;width:700px;height:680px;box-sizing:border-box;border-left:1px solid #c8ecd3;border-radius:0 0 9px 9px"></div>
<div class="a" style="left:1px;top:60px;width:699px;height:625px;box-sizing:border-box;border-left:1px solid #2f6b48;border-bottom:1.300px solid #2a6041;border-radius:0 0 9px 8px"></div>
</div></body></html>
